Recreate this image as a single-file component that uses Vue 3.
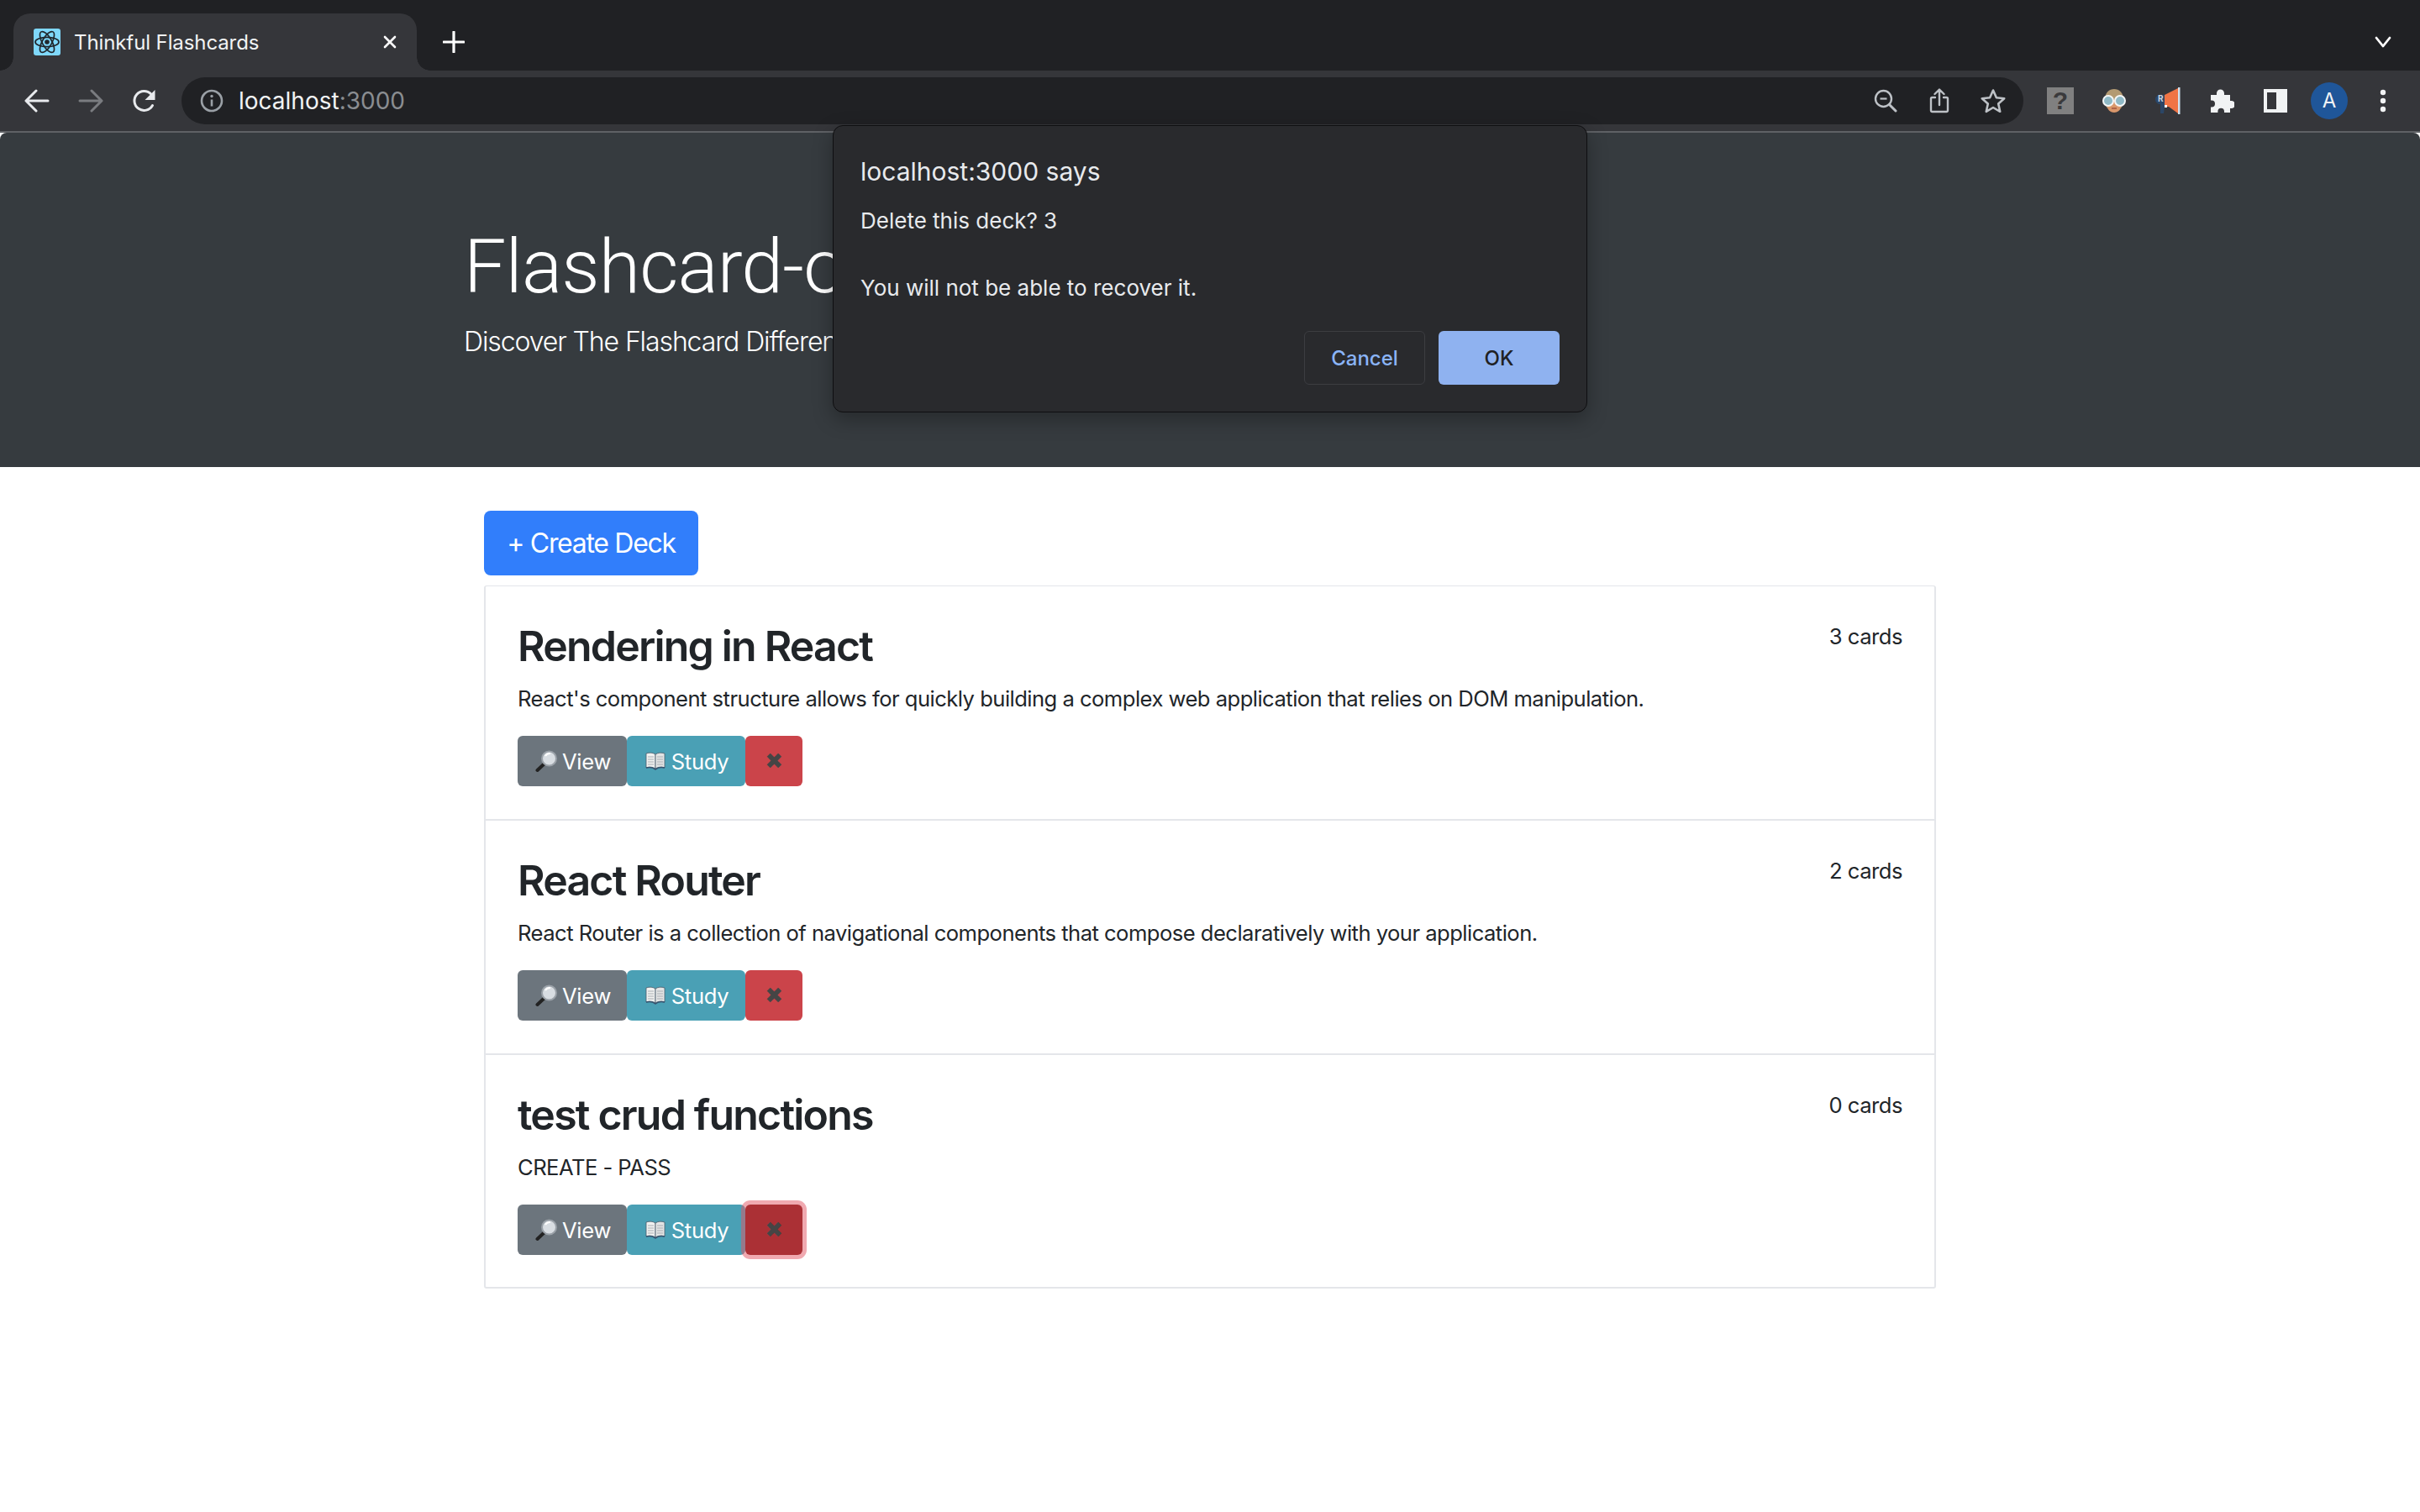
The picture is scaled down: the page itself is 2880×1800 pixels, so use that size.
<script setup>
const decks = [
  { name: 'Rendering in React', count: '3 cards', text: "React's component structure allows for quickly building a complex web application that relies on DOM manipulation." },
  { name: 'React Router', count: '2 cards', text: 'React Router is a collection of navigational components that compose declaratively with your application.' },
  { name: 'test crud functions', count: '0 cards', text: 'CREATE - PASS', focused: true },
]
</script>

<template>
  <div class="window">
    <div class="tabstrip">
      <div class="tab">
        <svg class="favicon" width="32" height="32" viewBox="0 0 32 32">
          <rect width="32" height="32" rx="3" fill="#7fd8fb" />
          <g fill="none" stroke="#20272c" stroke-width="1.7">
            <ellipse cx="16" cy="16" rx="14" ry="5.6" />
            <ellipse cx="16" cy="16" rx="14" ry="5.6" transform="rotate(60 16 16)" />
            <ellipse cx="16" cy="16" rx="14" ry="5.6" transform="rotate(120 16 16)" />
          </g>
          <circle cx="16" cy="16" r="2.8" fill="#20272c" />
        </svg>
        <span class="tab-title">Thinkful Flashcards</span>
        <svg class="tab-close" width="18" height="18" viewBox="0 0 18 18"><path d="M3 3l12 12M15 3 3 15" stroke="#fff" stroke-width="2.6" stroke-linecap="round" /></svg>
      </div>
      <svg class="new-tab" width="26" height="26" viewBox="0 0 26 26"><path d="M13 1v24M1 13h24" stroke="#fff" stroke-width="3.2" stroke-linecap="round" /></svg>
      <svg class="tab-menu" width="20" height="14" viewBox="0 0 20 14"><path d="M2 2l8 10 8-10" fill="none" stroke="#fff" stroke-width="2.8" stroke-linecap="round" stroke-linejoin="round" /></svg>
    </div>

    <div class="toolbar">
      <span class="slot">
        <svg width="30" height="28" viewBox="0 0 30 28"><path d="M28 14H3M14 2 2 14l12 12" fill="none" stroke="#e8eaed" stroke-width="3" stroke-linecap="round" stroke-linejoin="round" /></svg>
      </span>
      <span class="slot">
        <svg width="30" height="28" viewBox="0 0 30 28"><path d="M2 14h25M16 2l12 12-12 12" fill="none" stroke="#7a7c80" stroke-width="3" stroke-linecap="round" stroke-linejoin="round" /></svg>
      </span>
      <span class="slot">
        <svg width="30" height="30" viewBox="0 0 30 30"><path d="M24.5 20.5A11.5 11.5 0 1 1 22.8 7" fill="none" stroke="#e8eaed" stroke-width="3" stroke-linecap="round" /><path d="M27.5 2v12h-12z" fill="#e8eaed" /></svg>
      </span>

      <div class="omnibox">
        <svg class="info" width="28" height="28" viewBox="0 0 28 28"><circle cx="14" cy="14" r="12" fill="none" stroke="#9aa0a6" stroke-width="2.6" /><path d="M14 12.5v8" stroke="#9aa0a6" stroke-width="2.6" /><circle cx="14" cy="8.5" r="1.7" fill="#9aa0a6" /></svg>
        <span class="url">localhost<span class="port">:3000</span></span>
        <span class="omni-actions">
          <span class="slot">
            <svg width="28" height="28" viewBox="0 0 28 28"><circle cx="11.5" cy="11.5" r="9.5" fill="none" stroke="#bdc1c6" stroke-width="2.4" /><path d="M7.5 11.5h8" stroke="#bdc1c6" stroke-width="2.2" /><path d="M18.5 18.5 26 26" stroke="#bdc1c6" stroke-width="3" stroke-linecap="round" /></svg>
          </span>
          <span class="slot">
            <svg width="24" height="30" viewBox="0 0 24 30"><path d="M7 11H3.500A1.500 1.500 0 0 0 2 12.500V26.500A1.500 1.500 0 0 0 3.500 28h17a1.500 1.500 0 0 0 1.500-1.500V12.500A1.500 1.500 0 0 0 20.500 11H17M12 20V2M6.500 7 12 1.500 17.500 7" fill="none" stroke="#bdc1c6" stroke-width="2.400" stroke-linecap="round" stroke-linejoin="round" /></svg>
          </span>
          <span class="slot">
            <svg width="30" height="30" viewBox="0 0 30 30"><path d="M15 2.500 18.900 11.200 28.200 12.200 21.200 18.500 23.200 27.800 15 23 6.800 27.800 8.800 18.500 1.800 12.200 11.100 11.200Z" fill="none" stroke="#bdc1c6" stroke-width="2.600" stroke-linejoin="round" /></svg>
          </span>
        </span>
      </div>

      <span class="slot">
        <span class="ext-help">?</span>
      </span>
      <span class="slot">
        <svg width="32" height="30" viewBox="0 0 32 30">
          <path d="M5 14C5 5 10 1 16 1s11 4 11 13v5l-3 5H8l-3-5z" fill="#b39a72" />
          <path d="M8 15h16v7c0 4-4 7-8 7s-8-3-8-7z" fill="#d9976b" />
          <circle cx="9" cy="15" r="6" fill="#8fb9c6" stroke="#f4f6f6" stroke-width="2" />
          <circle cx="23" cy="15" r="6" fill="#8fb9c6" stroke="#f4f6f6" stroke-width="2" />
          <path d="M13 24h6" stroke="#a4553c" stroke-width="1.500" />
        </svg>
      </span>
      <span class="slot">
        <svg width="32" height="32" viewBox="0 0 32 32">
          <path d="M12 9 C5 8 1 10 1 14s3 6 6 6v11h4l1-8h2V9z" fill="#2b4666" />
          <path d="M12 9 28 1v30l-11-8h-5z" fill="#f07445" />
          <rect x="28" y="0" width="2.500" height="32" fill="#cfe0ee" />
          <rect x="12" y="21" width="3" height="3" fill="#fff" />
          <text x="4" y="17" class="ext-r">R</text>
        </svg>
      </span>
      <span class="slot">
        <svg width="30" height="30" viewBox="0 0 30 30"><path d="M2 8h7V6a4.500 4.500 0 0 1 9 0v2h7v7h1.500a4.500 4.500 0 0 1 0 9H25v5h-7v-1.500a3.800 3.800 0 0 0-7.600 0V29H2v-6.500h1a4 4 0 0 0 0-8H2z" fill="#f1f3f4" /></svg>
      </span>
      <span class="slot">
        <svg width="28" height="28" viewBox="0 0 28 28"><path d="M0 0h28v28H0zM4 4v20h11V4z" fill="#f1f3f4" fill-rule="evenodd" /></svg>
      </span>
      <span class="slot">
        <span class="avatar">A</span>
      </span>
      <span class="slot">
        <svg width="8" height="28" viewBox="0 0 8 28"><circle cx="4" cy="4" r="3.200" fill="#f1f3f4" /><circle cx="4" cy="14" r="3.200" fill="#f1f3f4" /><circle cx="4" cy="24" r="3.200" fill="#f1f3f4" /></svg>
      </span>
    </div>
    <div class="toolbar-line"></div>

    <header class="hero">
      <h1>Flashcard-o-matic</h1>
      <p>Discover The Flashcard Difference.</p>
    </header>

    <main class="content">
      <button class="create">+ Create Deck</button>
      <ul class="decks">
        <li v-for="deck in decks" :key="deck.name" class="deck">
          <div class="deck-head">
            <h3>{{ deck.name }}</h3>
            <small>{{ deck.count }}</small>
          </div>
          <p>{{ deck.text }}</p>
          <div class="actions">
            <button class="btn view">
              <svg width="27" height="27" viewBox="0 0 27 27">
                <path d="M11 16 2.500 24" stroke="#222" stroke-width="4" stroke-linecap="round" />
                <circle cx="16.500" cy="10" r="8.500" fill="#d8dde2" stroke="#9aa1a8" stroke-width="2" />
                <path d="M12 7a6 6 0 0 1 6-3" fill="none" stroke="#fff" stroke-width="2" />
              </svg>
              View
            </button>
            <button class="btn study">
              <svg width="24" height="22" viewBox="0 0 24 22">
                <path d="M1 2c4-1.500 8-1 11 1v17c-3-2-7-2.500-11-1z" fill="#f0f1f0" stroke="#4a5a6a" stroke-width=".8" />
                <path d="M23 2c-4-1.500-8-1-11 1v17c3-2 7-2.500 11-1z" fill="#e2e4e4" stroke="#4a5a6a" stroke-width=".8" />
                <path d="M3 6h7M3 9h7M3 12h7M3 15h7M14 6h7M14 9h7M14 12h7M14 15h7" stroke="#a8adb2" stroke-width="1" />
                <path d="M1 19c4-1 8-.5 11 2 3-2.500 7-3 11-2" fill="none" stroke="#34526e" stroke-width="1.600" />
              </svg>
              Study
            </button>
            <button class="btn remove" :class="{ focused: deck.focused }" aria-label="Delete">
              <span class="cross">✖</span>
            </button>
          </div>
        </li>
      </ul>
    </main>

    <div class="dialog" role="alertdialog">
      <div class="dialog-title">localhost:3000 says</div>
      <div class="dialog-line first">Delete this deck? 3</div>
      <div class="dialog-line second">You will not be able to recover it.</div>
      <div class="dialog-buttons">
        <button class="cancel">Cancel</button>
        <button class="ok">OK</button>
      </div>
    </div>
  </div>
</template>

<style scoped>
.window {
  position: relative;
  width: 2880px;
  height: 1800px;
  overflow: hidden;
  background: #fff;
  font-family: Inter, "Liberation Sans", sans-serif;
  color: #212529;
}
.tabstrip {
  height: 84px;
  box-sizing: border-box;
  padding-left: 16px;
  display: flex;
  align-items: flex-end;
  background: #202124;
}
.tab {
  position: relative;
  width: 480px;
  height: 68px;
  box-sizing: border-box;
  padding: 0 24px;
  display: flex;
  align-items: center;
  background: #35363a;
  border-radius: 20px 20px 0 0;
}
.tab::before,
.tab::after {
  content: "";
  position: absolute;
  bottom: 0;
  width: 16px;
  height: 16px;
}
.tab::before {
  left: -16px;
  background: radial-gradient(circle at 0 0, transparent 15.500px, #35363a 16px);
}
.tab::after {
  right: -16px;
  background: radial-gradient(circle at 100% 0, transparent 15.500px, #35363a 16px);
}
.favicon {
  flex: none;
}
.tab-title {
  margin-left: 16px;
  flex: 1;
  font-size: 24px;
  color: #f1f3f4;
  letter-spacing: -0.1px;
}
.tab-close {
  flex: none;
  margin-right: -1px;
}
.new-tab {
  margin: 0 0 21px 31px;
}
.tab-menu {
  margin: 0 34px 27px auto;
}
.toolbar {
  height: 72px;
  box-sizing: border-box;
  padding: 0 12px;
  display: flex;
  align-items: center;
  background: #35363a;
}
.slot {
  flex: none;
  width: 64px;
  height: 64px;
  display: flex;
  align-items: center;
  justify-content: center;
}
.omnibox {
  flex: 1;
  height: 56px;
  margin: 0 12px;
  padding: 0 4px 0 22px;
  display: flex;
  align-items: center;
  background: #202124;
  border-radius: 28px;
}
.info {
  flex: none;
}
.url {
  margin-left: 18px;
  font-size: 28px;
  letter-spacing: 0;
  color: #f1f3f4;
}
.port {
  color: #8a8d91;
}
.omni-actions {
  margin-left: auto;
  display: flex;
}
.ext-help {
  width: 32px;
  height: 32px;
  background: #808080;
  color: #3a3a3c;
  font: 700 30px/32px "Liberation Sans", sans-serif;
  text-align: center;
}
.ext-r {
  font: 700 10px Inter, sans-serif;
  fill: #c8d4e0;
}
.avatar {
  width: 44px;
  height: 44px;
  border-radius: 50%;
  background: #1f5699;
  color: #f1f3f4;
  font-size: 24px;
  line-height: 44px;
  text-align: center;
}
.toolbar-line {
  height: 2px;
  background: #5f6165;
}
.hero {
  height: 398px;
  box-sizing: border-box;
  padding: 106px 0 0 552px;
  background: #363b3f;
  border-radius: 8px 8px 0 0;
  color: #fff;
}
.hero h1 {
  margin: 0 0 12px;
  font-family: Roboto, Inter, sans-serif;
  font-size: 89.6px;
  font-weight: 300;
  line-height: 107px;
  letter-spacing: -0.8px;
}
.hero p {
  margin: 0;
  font-size: 32px;
  font-weight: 300;
  line-height: 48px;
  letter-spacing: -1.1px;
}
.content {
  width: 1728px;
  margin: 52px auto 0;
}
.create {
  display: block;
  width: 255px;
  height: 77px;
  padding: 0;
  border: 0;
  border-radius: 8px;
  background: #317efb;
  color: #fff;
  font: 400 32px Inter, sans-serif;
  letter-spacing: -1.3px;
}
.decks {
  list-style: none;
  margin: 12px 0 0;
  padding: 0;
  border: 2px solid #e4e6ea;
  border-top-width: 1px;
  border-radius: 3px;
}
.deck {
  height: 279px;
  box-sizing: border-box;
  padding: 41px 38px 0;
  border-bottom: 2px solid #e4e6ea;
}
.deck:last-child {
  height: 276px;
  border-bottom: 0;
}
.deck-head {
  display: flex;
  justify-content: space-between;
  align-items: flex-start;
}
.deck-head h3 {
  margin: 0;
  font-size: 50px;
  font-weight: 600;
  line-height: 60px;
  letter-spacing: -1.800px;
}
.deck-head small {
  font-size: 25.600px;
  line-height: 37px;
  letter-spacing: -0.5px;
}
.deck p {
  margin: 14px 0 0;
  font-size: 25.600px;
  line-height: 38px;
  letter-spacing: -0.53px;
}
.actions {
  margin-top: 25px;
  display: flex;
}
.btn {
  height: 60px;
  padding: 0;
  border: 0;
  border-radius: 6px;
  display: flex;
  align-items: center;
  justify-content: center;
  gap: 7px;
  color: #fff;
  font: 400 25.600px Inter, sans-serif;
  letter-spacing: -0.3px;
}
.btn svg {
  margin-left: 2px;
}
.view {
  width: 130px;
  background: #6c757d;
  gap: 5px;
}
.study {
  width: 141px;
  background: #4aa0b5;
}
.remove {
  width: 68px;
  background: #cb444a;
}
.remove.focused {
  position: relative;
  background: #ab3035;
  box-shadow: 0 0 0 5px rgba(225, 83, 97, 0.5);
}
.cross {
  color: #454545;
  font: 400 26px "DejaVu Sans", sans-serif;
}
.dialog {
  position: absolute;
  left: 991px;
  top: 149px;
  width: 898px;
  height: 342px;
  box-sizing: border-box;
  padding: 35px 32px 32px 32px;
  display: flex;
  flex-direction: column;
  background: #292a2d;
  border: 1px solid #0e0e10;
  border-radius: 12px;
  box-shadow: 0 8px 24px rgba(0, 0, 0, 0.3);
  color: #e8eaed;
}
.dialog-title {
  font-size: 30px;
  line-height: 38px;
}
.dialog-line {
  font-size: 26px;
  line-height: 40px;
}
.dialog-line.first {
  margin-top: 20px;
}
.dialog-line.second {
  margin-top: 40px;
}
.dialog-buttons {
  margin-top: auto;
  display: flex;
  justify-content: flex-end;
  gap: 16px;
}
.dialog-buttons button {
  width: 144px;
  height: 64px;
  padding: 0;
  border-radius: 6px;
  font: 500 24px Inter, sans-serif;
}
.cancel {
  background: transparent;
  border: 1px solid #3c3d41;
  color: #8ab4f8;
}
.ok {
  background: #8fb2f0;
  border: 0;
  color: #202124;
}
</style>
